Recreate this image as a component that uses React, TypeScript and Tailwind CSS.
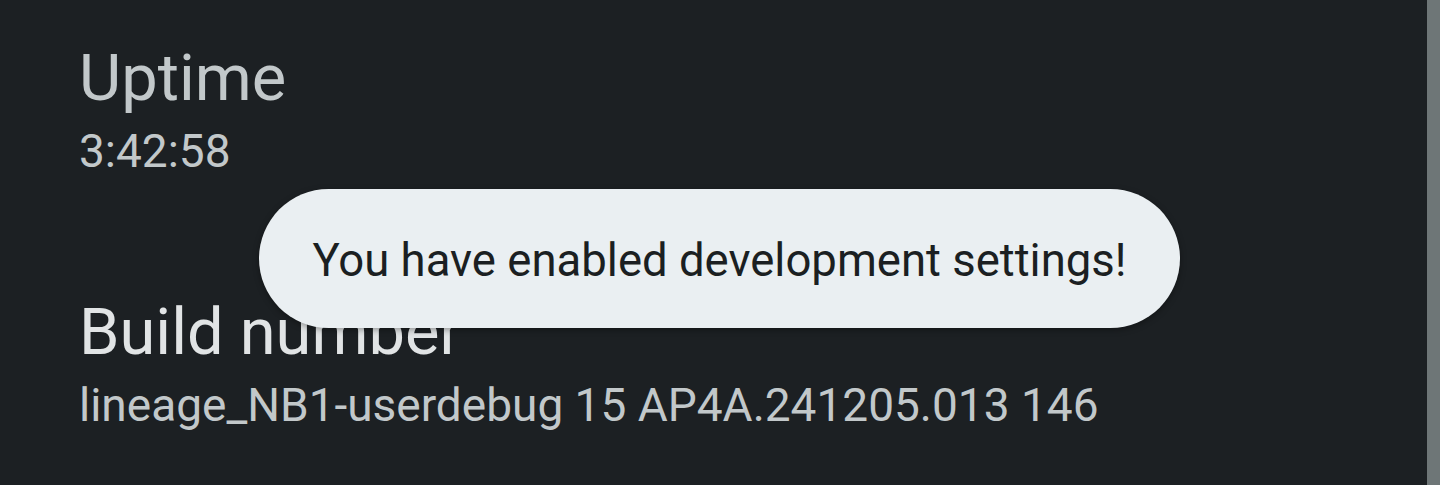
import React from 'react';

const items = [
  { title: 'Uptime', summary: '3:42:58', dim: true },
  { title: 'Build number', summary: 'lineage_NB1-userdebug 15 AP4A.241205.013 146', dim: false },
];

export default function App() {
  return (
    <div
      className="relative flex h-[485px] w-[1440px] overflow-hidden bg-[#1c2023]"
      style={{ fontFamily: 'Roboto, "Noto Sans", sans-serif' }}
    >
      <div className="flex flex-1 flex-col gap-[113px] pl-[79px] pt-[38px]">
        {items.map(item => (
          <div key={item.title} className="flex flex-col gap-[5px]">
            <div
              className={`text-[65px] leading-[80px] ${
                item.dim ? 'text-[#c2c8ca]' : 'text-[#e1e4e5]'
              }`}
            >
              {item.title}
            </div>
            <div className="text-[46px] leading-[56px] text-[#c2c8ca]">{item.summary}</div>
          </div>
        ))}
      </div>

      {/* scrollbar */}
      <div className="w-[13px] bg-[#6e7677]" />

      {/* toast */}
      <div className="absolute left-[259px] top-[189px] flex h-[139px] w-[921px] items-center justify-center rounded-full bg-[#eaeff2] pt-[6px] shadow-[0_2px_6px_rgba(0,0,0,0.35)]">
        <span className="text-[45.5px] text-[#1b1f22]">You have enabled development settings!</span>
      </div>
    </div>
  );
}
